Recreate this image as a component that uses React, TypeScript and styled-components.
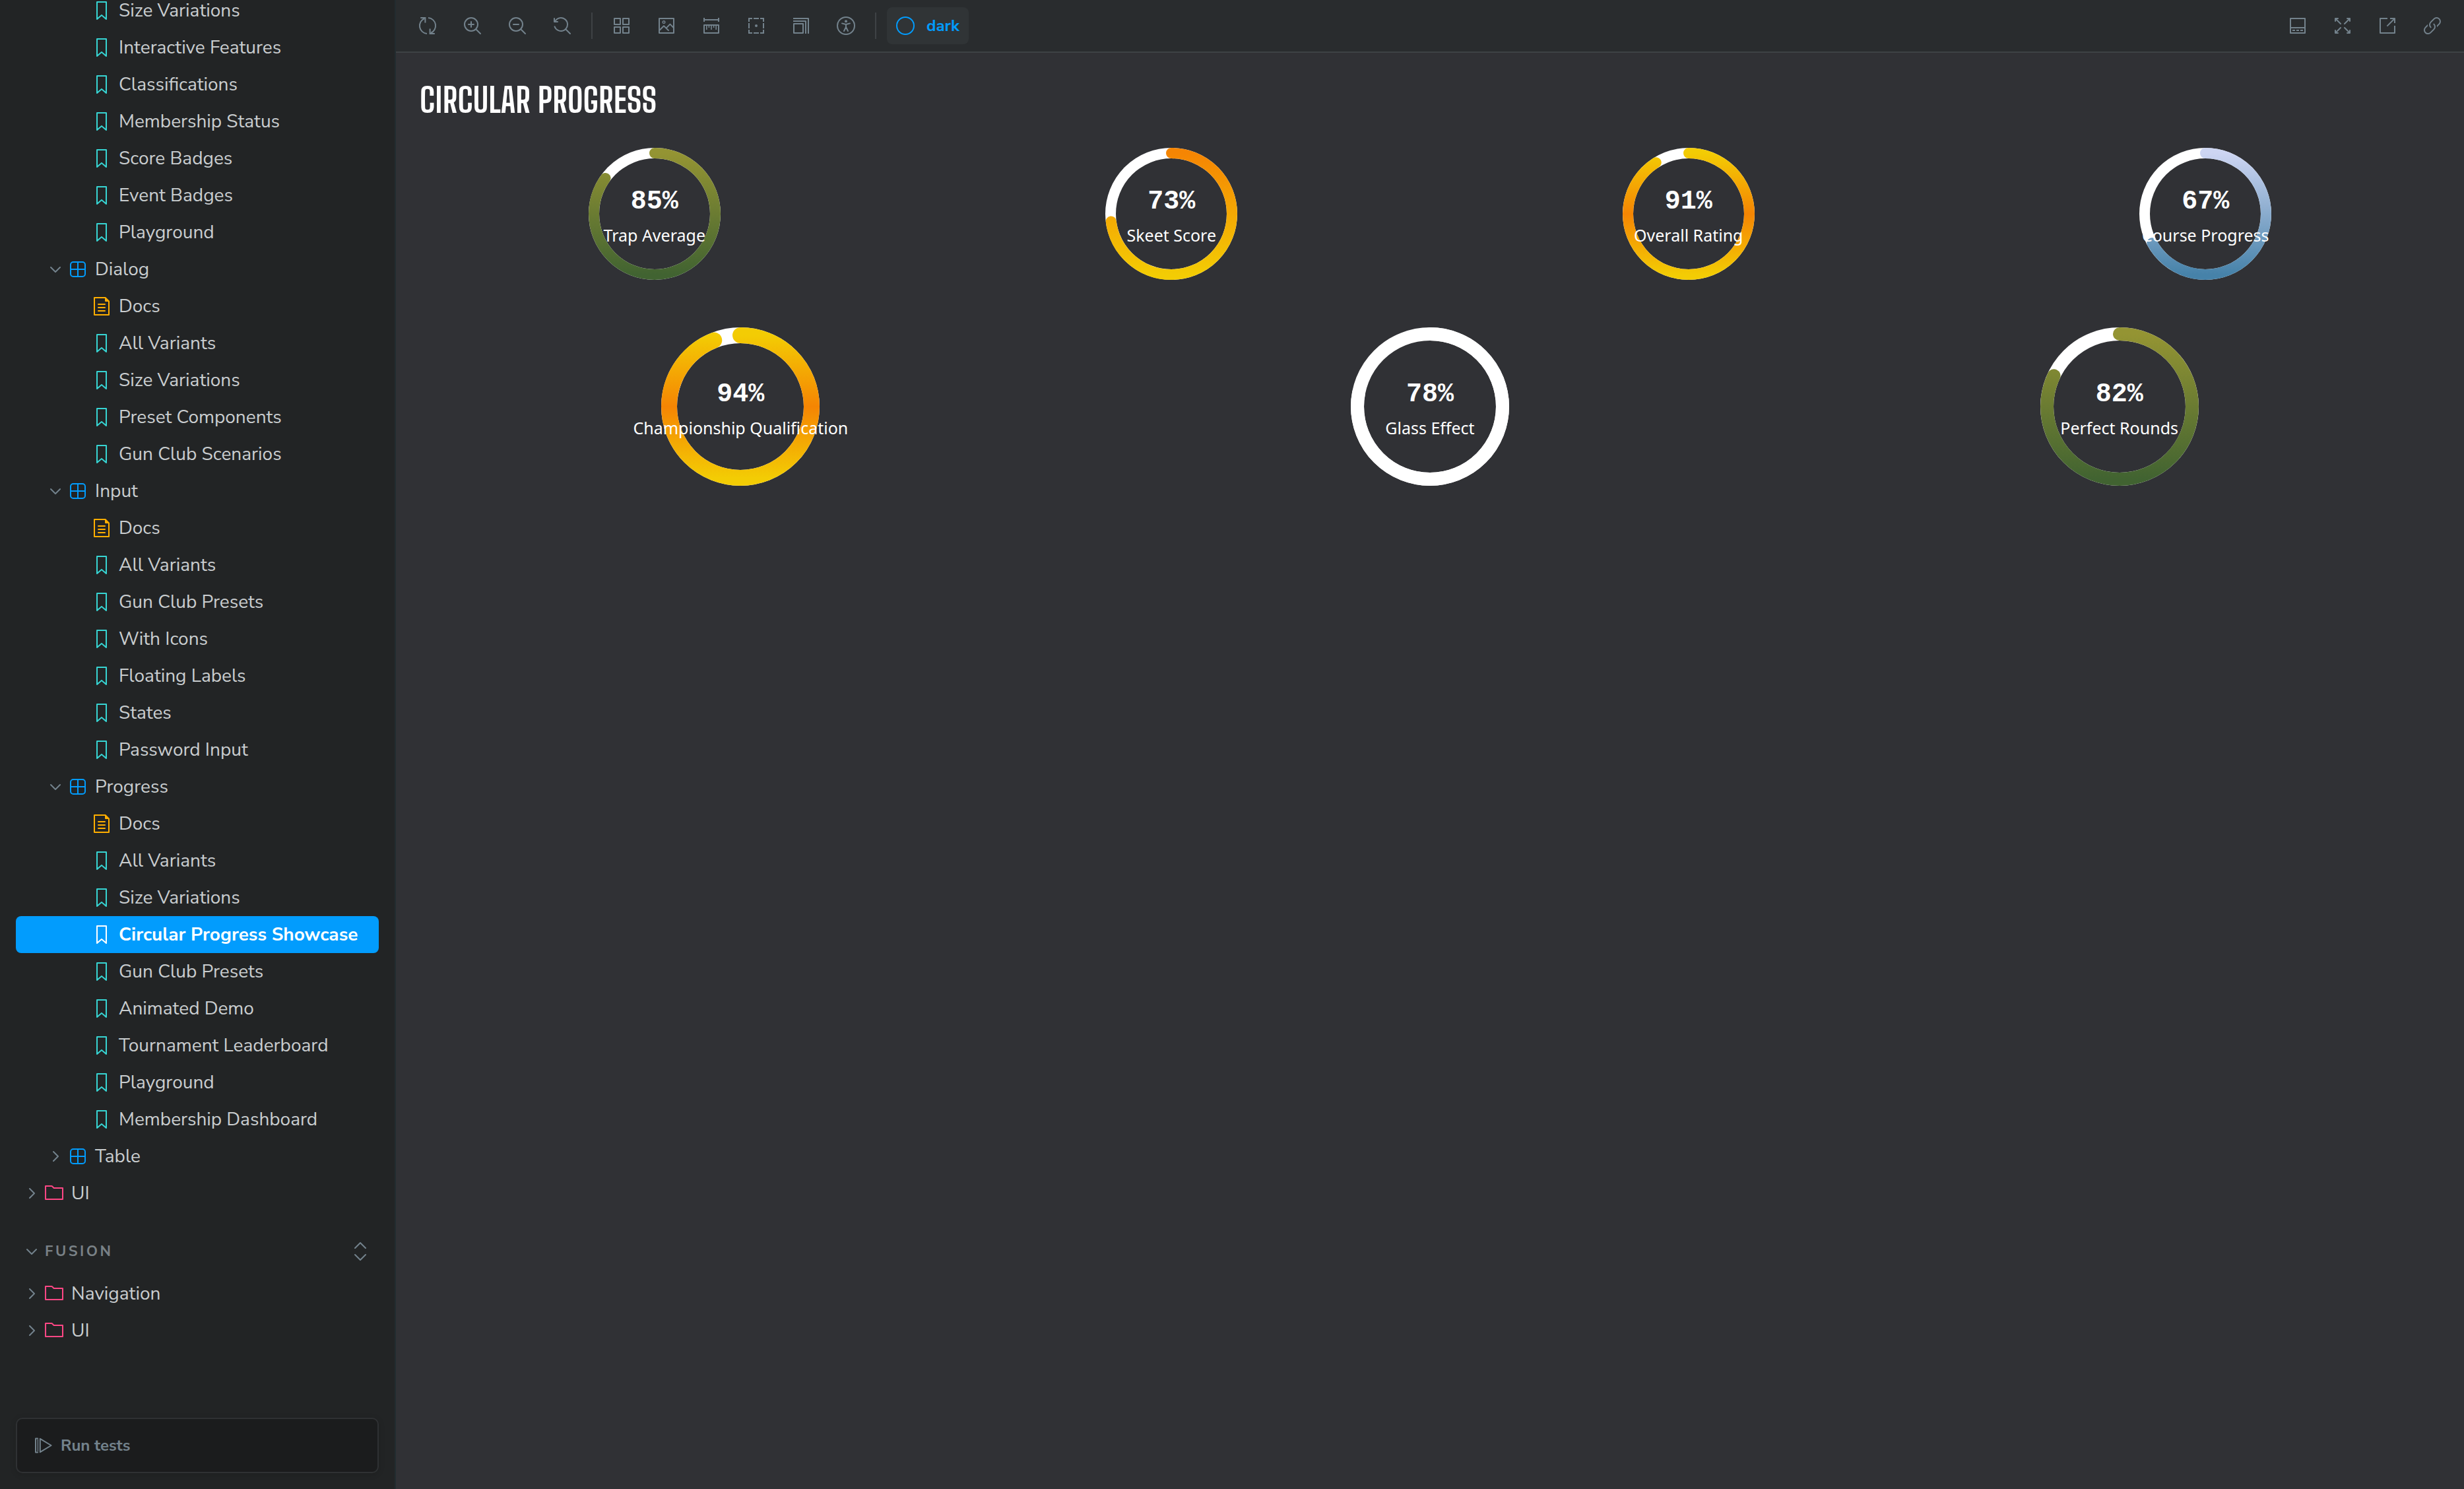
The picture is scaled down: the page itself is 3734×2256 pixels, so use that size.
import React from 'react';
import styled, { createGlobalStyle } from 'styled-components';

const SANS = '"Nunito Sans", Lato, "Open Sans", sans-serif';
const LABEL = '"Noto Sans", "Open Sans", sans-serif';
const MONO = '"Liberation Mono", monospace';
const TITLE = '"Big Shoulders Text", "Open Sans Condensed", "Roboto Condensed", sans-serif';

const GlobalStyle = createGlobalStyle`
  *, *::before, *::after { box-sizing: border-box; }
  body { margin: 0; background: #222425; color: #c9cdcf; font-family: ${SANS}; }
  button { font: inherit; color: inherit; background: none; border: 0; padding: 0; cursor: pointer; }
  a { color: inherit; text-decoration: none; }
  ul { list-style: none; margin: 0; padding: 0; }
  svg { display: block; flex: none; }
`;

const Shell = styled.div`
  display: grid;
  grid-template-columns: 600px minmax(0, 1fr);
  height: 100vh;
  overflow: hidden;
`;

/* ---------- icons ---------- */

const Glyph = styled.svg.attrs({ viewBox: '0 0 14 14', 'aria-hidden': true })`
  width: 28px;
  height: 28px;
  fill: currentColor;
`;
const LineGlyph = styled(Glyph)`
  fill: none;
  stroke: currentColor;
`;

const BookmarkIcon = () => (
  <Glyph>
    <path fillRule="evenodd" d="M3.5 0h7a.5.5 0 01.5.5v13a.5.5 0 01-.454.498.462.462 0 01-.371-.118L7 11.159l-3.175 2.72a.46.46 0 01-.379.118A.5.5 0 013 13.5V.5a.5.5 0 01.5-.5zM4 12.413l2.664-2.284a.454.454 0 01.377-.128.498.498 0 01.284.12L10 12.412V1H4v11.413z" />
  </Glyph>
);
const DocumentIcon = () => (
  <Glyph>
    <path d="M4 5.5a.5.5 0 01.5-.5h5a.5.5 0 010 1h-5a.5.5 0 01-.5-.5zM4.5 7.5a.5.5 0 000 1h5a.5.5 0 000-1h-5zM4 10.5a.5.5 0 01.5-.5h5a.5.5 0 010 1h-5a.5.5 0 01-.5-.5z" />
    <path fillRule="evenodd" d="M1.5 0a.5.5 0 00-.5.5v13a.5.5 0 00.5.5h11a.5.5 0 00.5-.5V3.207a.5.5 0 00-.146-.353L10.146.146A.5.5 0 009.793 0H1.5zM2 1h7.5v2a.5.5 0 00.5.5h2V13H2V1z" />
  </Glyph>
);
const ComponentIcon = () => (
  <Glyph>
    <path fillRule="evenodd" d="M3.5 1.004a2.5 2.5 0 00-2.5 2.5v7a2.5 2.5 0 002.5 2.5h7a2.5 2.5 0 002.5-2.5v-7a2.5 2.5 0 00-2.5-2.5h-7zm8.5 5.5H7.5v-4.5h3a1.5 1.5 0 011.5 1.5v3zm0 1v3a1.5 1.5 0 01-1.5 1.5h-3v-4.5H12zm-5.5 4.5v-4.5H2v3a1.5 1.5 0 001.5 1.5h3zM2 6.504h4.5v-4.5h-3a1.5 1.5 0 00-1.5 1.5v3z" />
  </Glyph>
);
const FolderIcon = () => (
  <Glyph>
    <path fillRule="evenodd" d="M6.586 3.504l-1.5-1.5H1v9h12v-7.5H6.586zm.414-1L5.793 1.297a1 1 0 00-.707-.293H.5a.5.5 0 00-.5.5v10a.5.5 0 00.5.5h13a.5.5 0 00.5-.5v-8.5a.5.5 0 00-.5-.5H7z" />
  </Glyph>
);
const ExpandAllIcon = () => (
  <Glyph>
    <path d="M7.354.15a.5.5 0 00-.708 0l-4 4a.5.5 0 10.708.707L7 1.211l3.646 3.646a.5.5 0 00.708-.707l-4-4zM11.354 9.15a.5.5 0 00-.708 0L7 12.797 3.354 9.15a.5.5 0 10-.708.708l4 4a.5.5 0 00.708 0l4-4a.5.5 0 000-.707z" />
  </Glyph>
);
const PlayAllIcon = () => (
  <LineGlyph strokeLinejoin="round" strokeLinecap="round">
    <path d="M2.6 1.7H1v10.6h1.6" />
    <path d="M2.7 2.6v8.8" strokeWidth=".7" />
    <path d="M4.4 1.9v10.2L12.8 7z" />
  </LineGlyph>
);
const SyncIcon = () => (
  <LineGlyph>
    <path d="M6.5 13A6 6 0 014.6 1.5" />
    <path d="M1.6 1h3.6v3.7" />
    <path d="M7.5 1a6 6 0 011.9 11.5" />
    <path d="M12.4 13H8.8V9.3" />
  </LineGlyph>
);
const ZoomInIcon = () => (
  <LineGlyph strokeLinecap="round">
    <circle cx="6" cy="6" r="5" />
    <path d="M10 10l3 3M6 4v4M4 6h4" />
  </LineGlyph>
);
const ZoomOutIcon = () => (
  <LineGlyph strokeLinecap="round">
    <circle cx="6" cy="6" r="5" />
    <path d="M10 10l3 3M4 6h4" />
  </LineGlyph>
);
const ZoomResetIcon = () => (
  <Glyph>
    <path d="M1.5 2.837V1.5a.5.5 0 00-1 0V4a.5.5 0 00.5.5h2.5a.5.5 0 000-1H2.258a4.5 4.5 0 11-.496 4.016.5.5 0 10-.942.337 5.502 5.502 0 008.724 2.353.5.5 0 00.102.148l3 3a.5.5 0 00.708-.708l-3-3a.5.5 0 00-.148-.102A5.5 5.5 0 101.5 2.837z" />
  </Glyph>
);
const GridIcon = () => (
  <LineGlyph strokeLinejoin="round">
    <path d="M1.5 1.5H6V6H1.5zM8 1.5h4.5V6H8zM1.5 8H6v4.5H1.5zM8 8h4.5v4.5H8z" />
  </LineGlyph>
);
const PhotoIcon = () => (
  <LineGlyph strokeLinejoin="round">
    <path d="M1.5 1.5h11v11h-11z" />
    <circle cx="5" cy="4.3" r=".9" strokeWidth=".7" />
    <path d="M1.5 10.6L5 7.1l3.8 3.7M6.8 8.8l2.9-3 2.8 2.8" />
  </LineGlyph>
);
const RulerIcon = () => (
  <LineGlyph strokeLinejoin="round">
    <path d="M1.5 1v3M12.5 1v3M1.5 2.5h11M1.5 6.5h11v6h-11z" />
    <path d="M3.4 6.5V10M5.2 6.5v2M7 6.5V10M8.8 6.5v2M10.6 6.5V10" strokeWidth=".8" />
  </LineGlyph>
);
const OutlineIcon = () => (
  <LineGlyph>
    <path d="M1.5 4V1.5H4M5 1.5h4M10 1.5h2.5V4M12.5 5v4M12.5 10v2.5H10M9 12.5H5M4 12.5H1.5V10M1.5 9V5" />
    <circle cx="7" cy="7" r="1" fill="currentColor" stroke="none" />
  </LineGlyph>
);
const ViewportIcon = () => (
  <LineGlyph strokeLinejoin="round">
    <path d="M1.5 5.5h7v7h-7zM1 3.5h9.5V13M1 1.5h11.5V13" />
  </LineGlyph>
);
const AccessibilityIcon = () => (
  <LineGlyph strokeLinecap="round" strokeLinejoin="round">
    <circle cx="7" cy="7" r="6.5" />
    <circle cx="7" cy="3.6" r="1" fill="currentColor" stroke="none" />
    <path d="M4 5.2l3 .8 3-.8M7 6v2L5.5 11M7 8l1.5 3" />
  </LineGlyph>
);
const CircleIcon = () => (
  <LineGlyph>
    <circle cx="7" cy="7" r="6.5" />
  </LineGlyph>
);
const BottomPanelIcon = () => (
  <LineGlyph strokeLinejoin="round">
    <path d="M1.5 1.5h11v11h-11zM1.5 8.5h11M3 10.5h2M6 10.5h2M9 10.5h2" />
  </LineGlyph>
);
const FullscreenIcon = () => (
  <LineGlyph strokeLinejoin="round" strokeLinecap="round">
    <path d="M1.5 3.5v-2h2M1.5 1.5l4 4M10.5 1.5h2v2M12.5 1.5l-4 4M1.5 10.5v2h2M1.5 12.5l4-4M12.5 10.5v2h-2M12.5 12.5l-4-4" />
  </LineGlyph>
);
const ShareIcon = () => (
  <LineGlyph strokeLinejoin="round">
    <path d="M7 1.5H1.5v11h11V7M9 1.5h3.5V5M12.5 1.5L6.7 7.3" />
  </LineGlyph>
);
const LinkIcon = () => (
  <Glyph>
    <path d="M11.841 2.159a2.25 2.25 0 00-3.182 0l-2.5 2.5a2.25 2.25 0 000 3.182.5.5 0 01-.707.707 3.25 3.25 0 010-4.596l2.5-2.5a3.25 3.25 0 014.596 4.596l-2.063 2.063a4.27 4.27 0 00-.094-1.32l1.45-1.45a2.25 2.25 0 000-3.182z" />
    <path d="M3.61 7.21c-.1-.434-.132-.88-.095-1.321L1.452 7.952a3.25 3.25 0 104.596 4.596l2.5-2.5a3.25 3.25 0 000-4.596.5.5 0 00-.707.707 2.25 2.25 0 010 3.182l-2.5 2.5A2.25 2.25 0 112.159 8.66l1.45-1.45z" />
  </Glyph>
);

const Caret = styled.svg.attrs({ viewBox: '0 0 16 16', 'aria-hidden': true })<{ $open?: boolean }>`
  width: 16px;
  height: 16px;
  fill: none;
  stroke: #73828c;
  stroke-width: 2px;
  stroke-linecap: round;
  stroke-linejoin: round;
  transform: rotate(${p => (p.$open ? '90deg' : '0deg')});
`;
const Chevron = ({ open }: { open?: boolean }) => (
  <Caret $open={open}>
    <path d="M5 1l7 7-7 7" />
  </Caret>
);

/* ---------- sidebar ---------- */

const Sidebar = styled.aside`
  display: flex;
  flex-direction: column;
  min-height: 0;
  padding: 0 24px 24px;
  background: #222425;
  border-right: 2px solid #222c30;
`;

const Tree = styled.nav`
  flex: 1;
  min-height: 0;
  overflow: hidden;
`;

const ScrolledList = styled.ul`
  margin-top: -12px;
`;

type Kind = 'group' | 'component' | 'docs' | 'story';
const indent: Record<Kind, string> = { group: '16px', component: '52px', docs: '116px', story: '116px' };
const tint: Record<Kind, string> = { group: '#ff4785', component: '#029cfd', docs: '#ffae00', story: '#37d5d3' };

const Row = styled.a<{ $kind: Kind; $selected?: boolean }>`
  display: flex;
  align-items: center;
  gap: 12px;
  height: 56px;
  width: 100%;
  padding-left: ${p => indent[p.$kind]};
  border-radius: 8px;
  font-size: 28px;
  line-height: 36px;
  text-align: left;
  white-space: nowrap;
  color: ${p => (p.$selected ? '#ffffff' : '#c9cdcf')};
  background: ${p => (p.$selected ? '#029cfd' : 'transparent')};
  font-weight: ${p => (p.$selected ? 700 : 400)};

  ${Glyph} {
    color: ${p => (p.$selected ? '#ffffff' : tint[p.$kind])};
  }
`;

const SectionHead = styled.div`
  display: flex;
  align-items: center;
  justify-content: space-between;
  height: 56px;
  margin: 32px 0 8px;
  padding: 0 14px 0 16px;
  color: #73828c;
`;

const SectionToggle = styled.button`
  display: flex;
  align-items: center;
  gap: 12px;
  font-size: 22px;
  line-height: 32px;
  font-weight: 700;
  letter-spacing: 0.16em;
  text-transform: uppercase;
  color: #798186;
`;

const IconButton = styled.button`
  display: grid;
  place-items: center;
`;

const RunTests = styled.button`
  display: flex;
  align-items: center;
  gap: 12px;
  height: 84px;
  padding: 0 26px;
  border: 2px solid #2f3133;
  border-radius: 10px;
  background: #1b1c1d;
  box-shadow: 0 2px 10px rgba(0, 0, 0, 0.15);
  font-size: 24px;
  line-height: 32px;
  font-weight: 700;
  color: #73828c;
`;

interface Node {
  kind: Kind;
  label: string;
  open?: boolean;
  selected?: boolean;
}
const group = (label: string): Node => ({ kind: 'group', label });
const component = (label: string, open = true): Node => ({ kind: 'component', label, open });
const docs: Node = { kind: 'docs', label: 'Docs' };
const story = (label: string, selected = false): Node => ({ kind: 'story', label, selected });

const mainNodes: Node[] = [
  ...['Size Variations', 'Interactive Features', 'Classifications', 'Membership Status', 'Score Badges', 'Event Badges', 'Playground'].map(s => story(s)),
  component('Dialog'),
  docs,
  ...['All Variants', 'Size Variations', 'Preset Components', 'Gun Club Scenarios'].map(s => story(s)),
  component('Input'),
  docs,
  ...['All Variants', 'Gun Club Presets', 'With Icons', 'Floating Labels', 'States', 'Password Input'].map(s => story(s)),
  component('Progress'),
  docs,
  story('All Variants'),
  story('Size Variations'),
  story('Circular Progress Showcase', true),
  ...['Gun Club Presets', 'Animated Demo', 'Tournament Leaderboard', 'Playground', 'Membership Dashboard'].map(s => story(s)),
  component('Table', false),
  group('UI'),
];
const fusionNodes: Node[] = [group('Navigation'), group('UI')];

const icons: Record<Kind, () => React.JSX.Element> = {
  group: FolderIcon,
  component: ComponentIcon,
  docs: DocumentIcon,
  story: BookmarkIcon,
};

function TreeRow({ node }: { node: Node }) {
  const Icon = icons[node.kind];
  const branch = node.kind === 'group' || node.kind === 'component';
  return (
    <li>
      {branch ? (
        <Row as="button" $kind={node.kind} aria-expanded={!!node.open}>
          <Chevron open={node.open} />
          <Icon />
          {node.label}
        </Row>
      ) : (
        <Row href="#" $kind={node.kind} $selected={node.selected} aria-current={node.selected ? 'page' : undefined}>
          <Icon />
          {node.label}
        </Row>
      )}
    </li>
  );
}

/* ---------- toolbar ---------- */

const Main = styled.main`
  display: flex;
  flex-direction: column;
  min-width: 0;
  background: #303135;
`;

const Toolbar = styled.div`
  display: flex;
  align-items: center;
  justify-content: space-between;
  height: 80px;
  padding: 0 20px;
  background: #292c2e;
  border-bottom: 2px solid #3e4245;
  color: #73828c;
`;

const Tools = styled.div`
  display: flex;
  align-items: center;
  gap: 12px;
`;

const Tool = styled(IconButton)`
  width: 56px;
  height: 56px;
  border-radius: 8px;
`;

const Divider = styled.span`
  width: 2px;
  height: 40px;
  margin: 0 4px;
  background: #3e4245;
`;

const ThemeButton = styled.button`
  display: flex;
  align-items: center;
  gap: 18px;
  height: 56px;
  padding: 0 14px;
  border-radius: 8px;
  background: #303436;
  color: #029cfd;
  font-size: 24px;
  line-height: 32px;
  font-weight: 700;
`;

type ToolItem = [string, () => React.JSX.Element];

const zoomTools: ToolItem[] = [
  ['Remount component', SyncIcon],
  ['Zoom in', ZoomInIcon],
  ['Zoom out', ZoomOutIcon],
  ['Reset zoom', ZoomResetIcon],
];
const viewTools: ToolItem[] = [
  ['Apply a grid', GridIcon],
  ['Change background', PhotoIcon],
  ['Enable measure', RulerIcon],
  ['Apply outlines', OutlineIcon],
  ['Change viewport', ViewportIcon],
  ['Vision simulator', AccessibilityIcon],
];
const pageTools: ToolItem[] = [
  ['Show addons', BottomPanelIcon],
  ['Go full screen', FullscreenIcon],
  ['Open canvas in new tab', ShareIcon],
  ['Copy canvas link', LinkIcon],
];
const renderTools = (list: ToolItem[]) =>
  list.map(([name, Icon]) => (
    <Tool key={name} aria-label={name}>
      <Icon />
    </Tool>
  ));

/* ---------- canvas ---------- */

const Canvas = styled.section`
  display: flex;
  flex-direction: column;
  gap: 32px;
  padding: 32px;
  color: #ffffff;
`;

const Title = styled.h1`
  margin: 0;
  padding: 0 4px;
  font-family: ${TITLE};
  font-size: 50px;
  line-height: 80px;
  font-weight: 700;
  text-transform: uppercase;
`;

const Rings = styled.div`
  display: flex;
  flex-direction: column;
  gap: 72px;
`;

const RingRow = styled.div<{ $columns: number }>`
  display: grid;
  grid-template-columns: repeat(${p => p.$columns}, minmax(0, 1fr));
  gap: 64px;
  justify-items: center;
`;

const Ring = styled.figure`
  display: grid;
  place-items: center;
  margin: 0;

  > * {
    grid-area: 1 / 1;
  }
`;

const Caption = styled.figcaption`
  display: flex;
  flex-direction: column;
  align-items: center;
  white-space: nowrap;
`;

const Percent = styled.strong`
  font-family: ${MONO};
  font-size: 40px;
  line-height: 64px;
  font-weight: 700;
`;

const Label = styled.span`
  font-family: ${LABEL};
  font-size: 25px;
  line-height: 36px;
`;

interface RingProps {
  id: string;
  value: number;
  label: string;
  size: number;
  stroke: number;
  stops: string[];
}

function CircularProgress({ id, value, label, size, stroke, stops }: RingProps) {
  const c = size / 2;
  const r = c - stroke / 2;
  return (
    <Ring>
      <svg width={size} height={size} fill="none" strokeWidth={stroke} aria-hidden="true">
        <defs>
          <linearGradient id={id} x1="0" y1="0" x2="0" y2="1">
            {stops.map((color, i) => (
              <stop key={i} offset={i / (stops.length - 1)} stopColor={color} />
            ))}
          </linearGradient>
        </defs>
        <circle cx={c} cy={c} r={r} stroke="#ffffff" />
        <path
          d={`M${c} ${c - r}a${r} ${r} 0 0 1 0 ${2 * r}a${r} ${r} 0 0 1 0 ${-2 * r}`}
          pathLength={100}
          strokeDasharray={`${value} 100`}
          strokeLinecap="round"
          stroke={`url(#${id})`}
        />
      </svg>
      <Caption>
        <Percent>{value}%</Percent>
        <Label>{label}</Label>
      </Caption>
    </Ring>
  );
}

const olive = ['#949433', '#416331'];
const gold = ['#f3cc04', '#f58503', '#f3cc04'];

const small: RingProps[] = [
  { id: 'trap', value: 85, label: 'Trap Average', size: 200, stroke: 16, stops: olive },
  { id: 'skeet', value: 73, label: 'Skeet Score', size: 200, stroke: 16, stops: ['#f58503', '#f3cc04'] },
  { id: 'overall', value: 91, label: 'Overall Rating', size: 200, stroke: 16, stops: gold },
  { id: 'course', value: 67, label: 'Course Progress', size: 200, stroke: 16, stops: ['#cdd5f2', '#4682a9'] },
];
const large: RingProps[] = [
  { id: 'championship', value: 94, label: 'Championship Qualification', size: 240, stroke: 24, stops: gold },
  { id: 'glass', value: 78, label: 'Glass Effect', size: 240, stroke: 20, stops: ['#ffffff', '#ffffff'] },
  { id: 'perfect', value: 82, label: 'Perfect Rounds', size: 240, stroke: 20, stops: olive },
];

export default function App() {
  return (
    <>
      <GlobalStyle />
      <Shell>
        <Sidebar>
          <Tree aria-label="Stories">
            <ScrolledList>
              {mainNodes.map((node, i) => (
                <TreeRow key={i} node={node} />
              ))}
            </ScrolledList>
            <SectionHead>
              <SectionToggle aria-expanded="true">
                <Chevron open />
                Fusion
              </SectionToggle>
              <IconButton aria-label="Expand all">
                <ExpandAllIcon />
              </IconButton>
            </SectionHead>
            <ul>
              {fusionNodes.map(node => (
                <TreeRow key={node.label} node={node} />
              ))}
            </ul>
          </Tree>
          <RunTests>
            <PlayAllIcon />
            Run tests
          </RunTests>
        </Sidebar>
        <Main>
          <Toolbar role="toolbar">
            <Tools>
              {renderTools(zoomTools)}
              <Divider />
              {renderTools(viewTools)}
              <Divider />
              <ThemeButton>
                <CircleIcon />
                dark
              </ThemeButton>
            </Tools>
            <Tools>{renderTools(pageTools)}</Tools>
          </Toolbar>
          <Canvas>
            <Title>Circular Progress</Title>
            <Rings>
              <RingRow $columns={4}>
                {small.map(ring => (
                  <CircularProgress key={ring.id} {...ring} />
                ))}
              </RingRow>
              <RingRow $columns={3}>
                {large.map(ring => (
                  <CircularProgress key={ring.id} {...ring} />
                ))}
              </RingRow>
            </Rings>
          </Canvas>
        </Main>
      </Shell>
    </>
  );
}
